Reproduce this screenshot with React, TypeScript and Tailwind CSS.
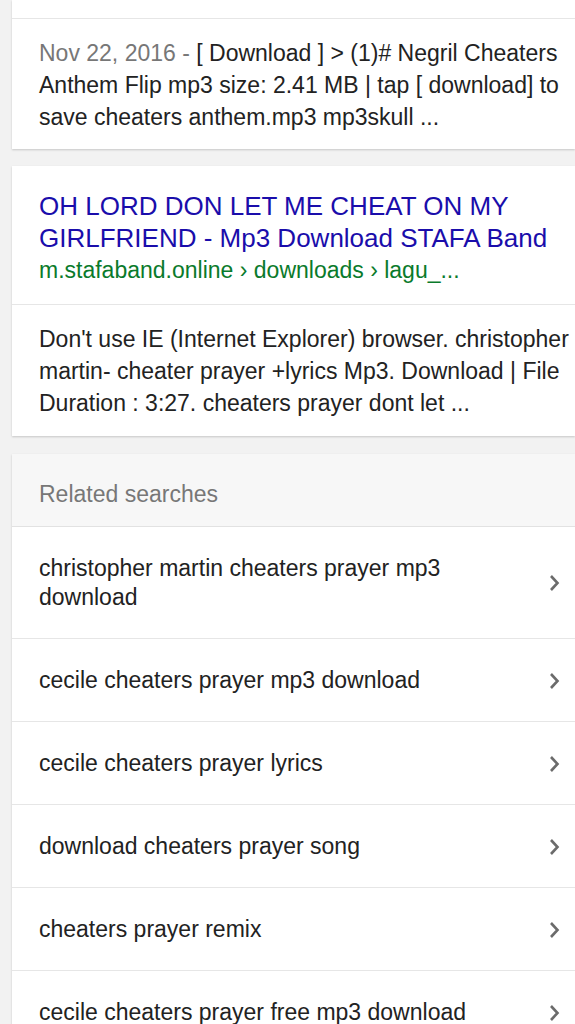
const Chevron = () => (
  <svg width="14" height="20" viewBox="0 0 14 20" className="shrink-0">
    <path d="M4 3 L10.5 10 L4 17" fill="none" stroke="#6b6b6b" strokeWidth="2.6" />
  </svg>
);

const related = [
  "christopher martin cheaters prayer mp3 download",
  "cecile cheaters prayer mp3 download",
  "cecile cheaters prayer lyrics",
  "download cheaters prayer song",
  "cheaters prayer remix",
  "cecile cheaters prayer free mp3 download",
];

export default function App() {
  return (
    <div
      className="min-h-screen bg-[#f2f2f2] text-[23px] text-[#222]"
      style={{ fontFamily: '"Liberation Sans", Arial, sans-serif' }}
    >
      {/* previous result (cut off at top) */}
      <div className="ml-[12px] bg-white shadow-[0_1px_2px_rgba(0,0,0,0.18)]">
        <div className="h-[19px] border-b border-[#e6e6e6]" />
        <div className="pl-[27px] pr-2 pt-[18px] pb-[16px] leading-[32px]">
          <span className="text-[#777]">Nov 22, 2016 - </span>
          [ Download ] &gt; (1)# Negril Cheaters Anthem Flip mp3 size: 2.41 MB | tap [ download] to save cheaters anthem.mp3 mp3skull ...
        </div>
      </div>

      {/* stafaband result */}
      <div className="ml-[12px] mt-[17px] bg-white shadow-[0_1px_2px_rgba(0,0,0,0.18)]">
        <div className="pl-[27px] pr-2 pt-[24px] pb-[18px] border-b border-[#e6e6e6]">
          <div className="text-[#1a0dab] text-[26px] leading-[32px]">
            OH LORD DON LET ME CHEAT ON MY GIRLFRIEND - Mp3 Download STAFA Band
          </div>
          <div className="text-[#0a7a2b] leading-[32px]">
            m.stafaband.online › downloads › lagu_...
          </div>
        </div>
        <div className="pl-[27px] pr-1 pt-[18px] pb-[17px] leading-[32px]">
          Don't use IE (Internet Explorer) browser. christopher martin- cheater prayer +lyrics Mp3. Download | File Duration : 3:27. cheaters prayer dont let ...
        </div>
      </div>

      {/* related searches */}
      <div className="ml-[12px] mt-[18px] bg-white shadow-[0_1px_2px_rgba(0,0,0,0.18)]">
        <div className="bg-[#f7f7f7] pl-[27px] h-[73px] flex items-center pt-[8px] border-b border-[#e2e2e2] text-[#777]">
          Related searches
        </div>
        {related.map((r) => (
          <div
            key={r}
            className="flex items-center justify-between pl-[27px] pr-[14px] pt-[27px] pb-[26px] border-b border-[#e6e6e6] leading-[29px]"
          >
            <span className="pr-[40px]">{r}</span>
            <Chevron />
          </div>
        ))}
      </div>
    </div>
  );
}
